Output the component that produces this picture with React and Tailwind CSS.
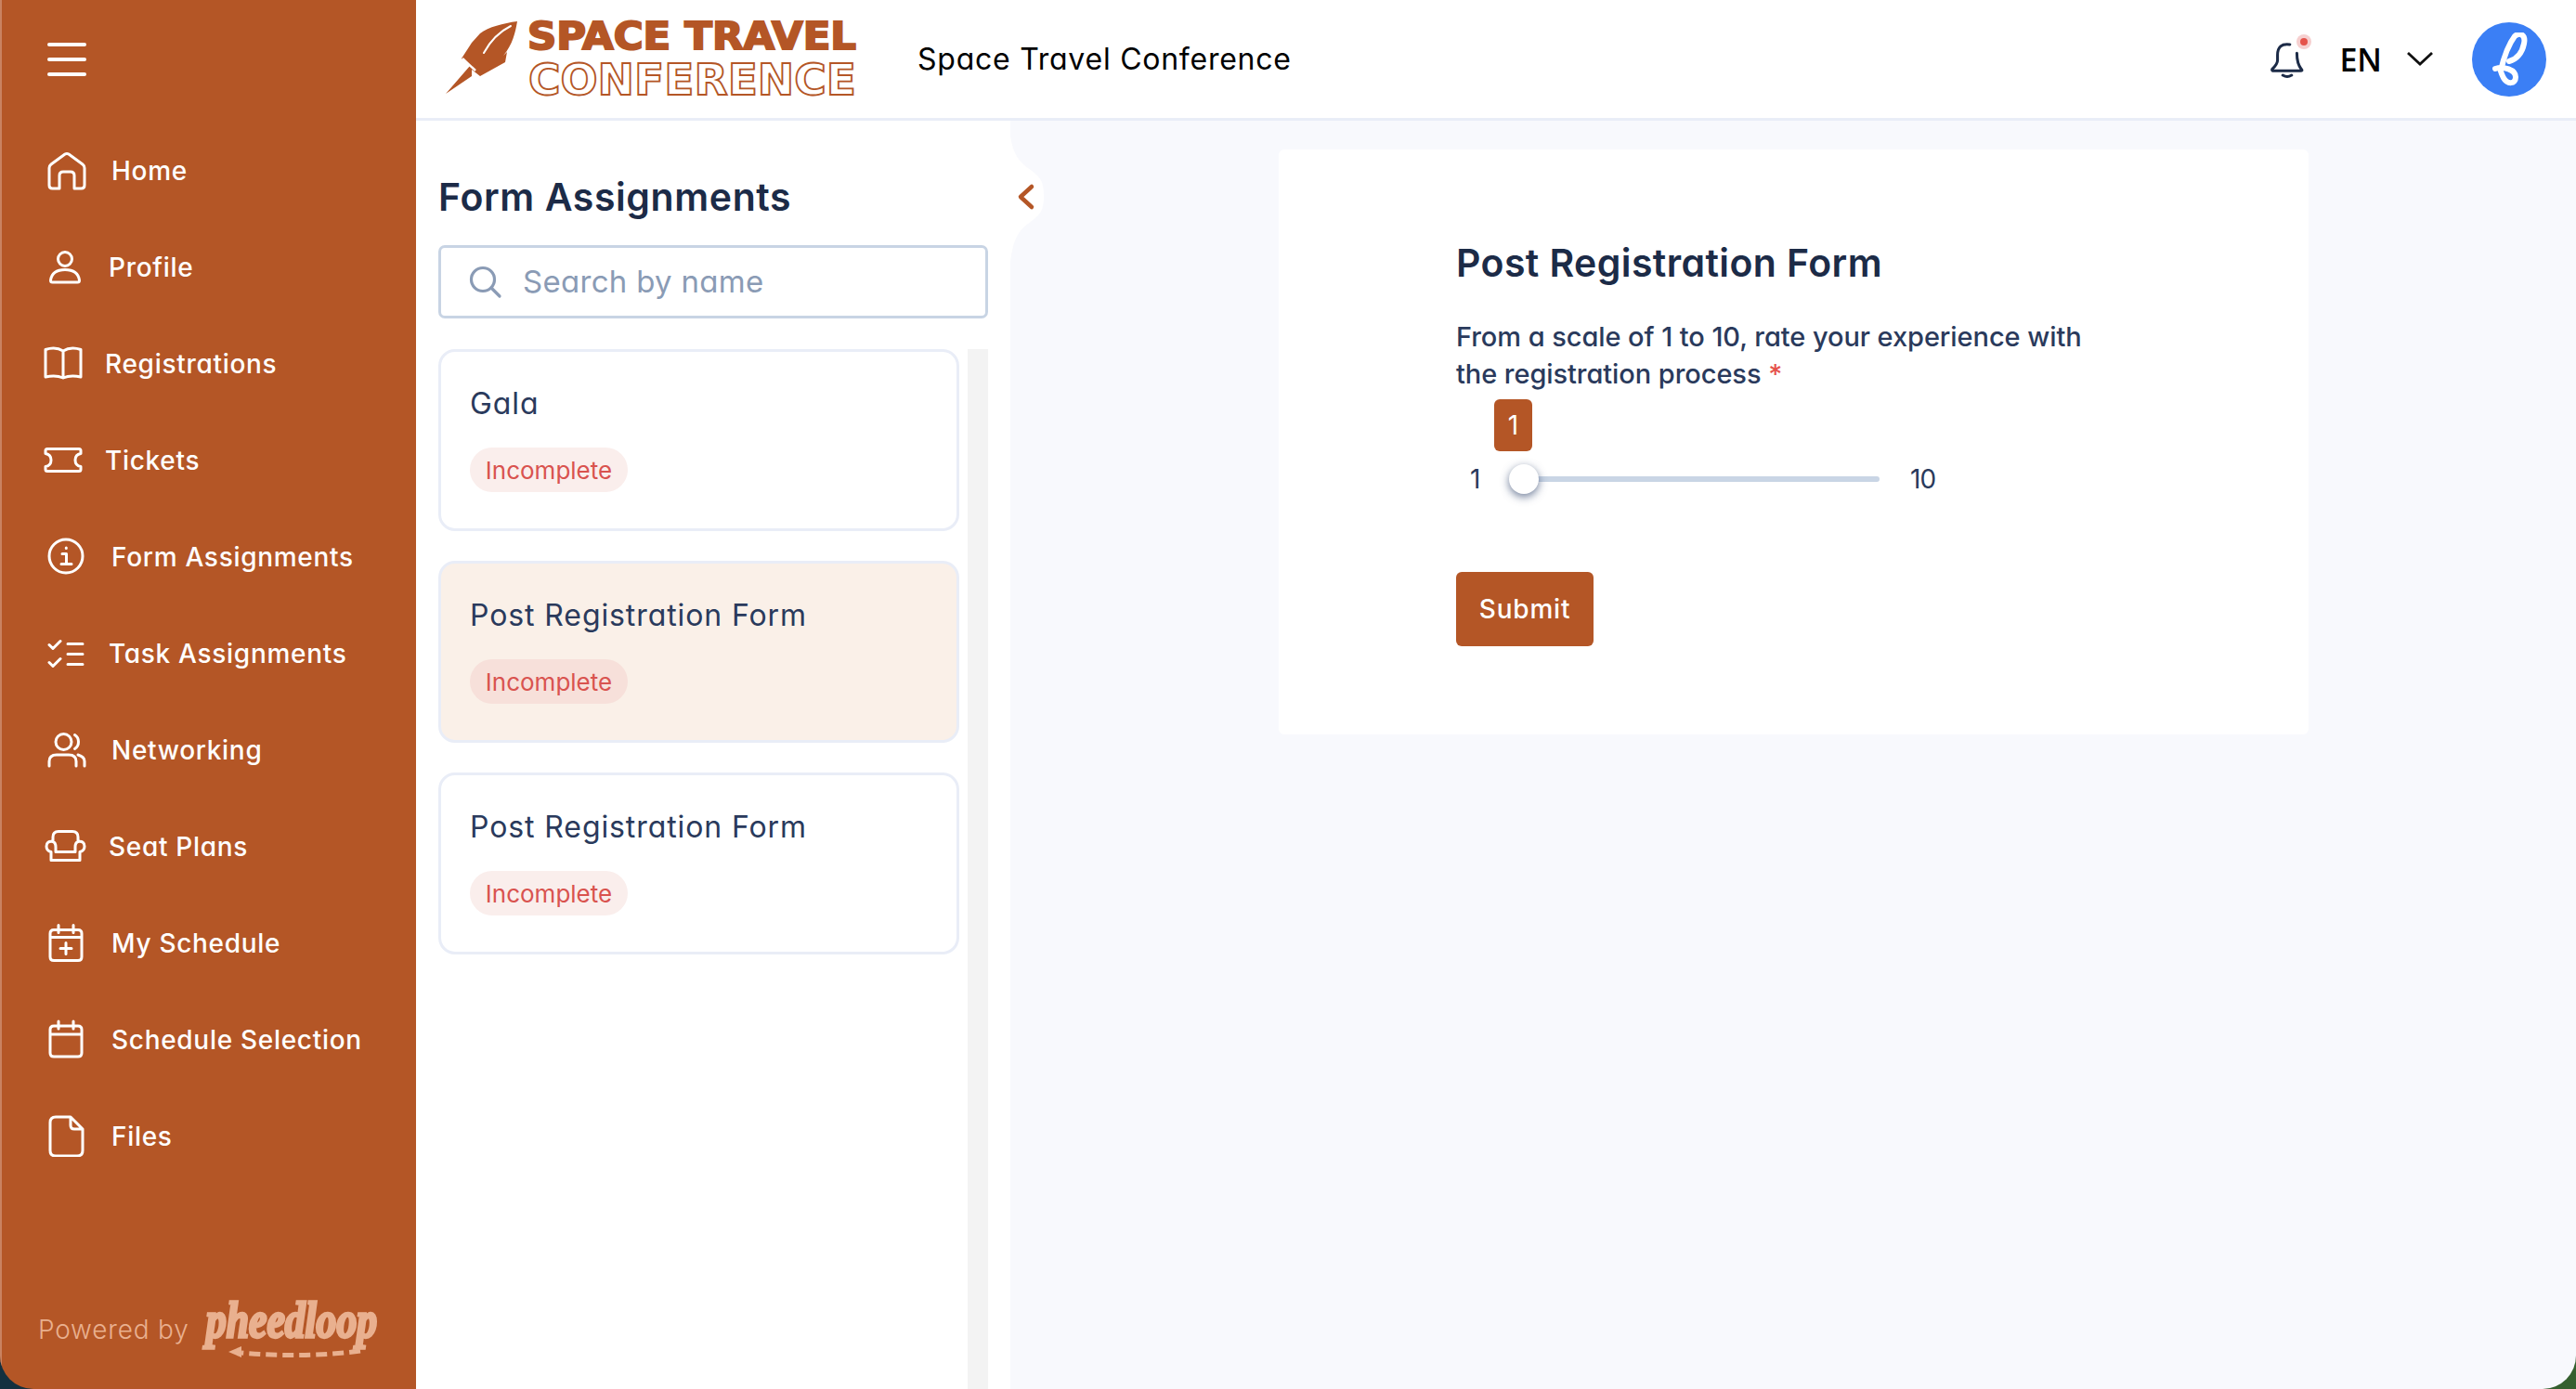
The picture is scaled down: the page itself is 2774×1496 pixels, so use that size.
const NAV = [
  { label: 'Home', box: 'w-[80px]', icon: 'home' },
  { label: 'Profile', box: 'w-[77px]', icon: 'profile' },
  { label: 'Registrations', box: 'w-[73px]', icon: 'book' },
  { label: 'Tickets', box: 'w-[73px]', icon: 'ticket' },
  { label: 'Form Assignments', box: 'w-[80px]', icon: 'info' },
  { label: 'Task Assignments', box: 'w-[77px]', icon: 'tasks' },
  { label: 'Networking', box: 'w-[80px]', icon: 'people' },
  { label: 'Seat Plans', box: 'w-[77px]', icon: 'chair' },
  { label: 'My Schedule', box: 'w-[80px]', icon: 'calendarPlus' },
  { label: 'Schedule Selection', box: 'w-[80px]', icon: 'calendar' },
  { label: 'Files', box: 'w-[80px]', icon: 'file' },
];

const CARDS = [
  { title: 'Gala', active: false },
  { title: 'Post Registration Form', active: true },
  { title: 'Post Registration Form', active: false },
];

const ICON_PATHS = {
  home: 'M13 39H5.5Q2 39 2 35.5V17Q2 14.5 4 13L19 2Q21 0.8 23 2L38 13Q40 14.5 40 17V35.5Q40 39 36.5 39H29V25Q29 21 25 21H17Q13 21 13 25V39Z',
  profile: 'M26.5 8.5A7.5 7.5 0 1 1 11.5 8.5A7.5 7.5 0 1 1 26.5 8.5ZM3.5 31.5Q5 20 19 20Q33 20 34.5 31.5Q34.5 33.5 32.5 33.5H5.5Q3.5 33.5 3.5 31.5Z',
  book: 'M2 33V3.5Q13 0 21 5Q29 0 40 3.5V33Q29 30.5 21 34Q13 30.5 2 33ZM21 5V34',
  ticket: 'M4 2H38Q40 2 40 4V7Q34 8 34 14Q34 20 40 21V24Q40 26 38 26H4Q2 26 2 24V21Q8 20 8 14Q8 8 2 7V4Q2 2 4 2Z',
  info: 'M38 20.5A18 18 0 1 1 2 20.5A18 18 0 1 1 38 20.5ZM16 18H20.5V29M15 29H26M20.3 11.5V12',
  tasks: 'M2 9L6 13L14 5M2 28L6 32L14 24M22 8H38M22 19H38M22 30H38',
  people: 'M26 11A8.5 8.5 0 1 1 9 11A8.5 8.5 0 1 1 26 11ZM29.5 3.5Q33.5 6 33.5 11Q33.5 16 29.5 18.5M2 37V32Q2 25 10 25H23Q31 25 31 32V37M33 25Q40 27 40 32V37',
  chair: 'M9 13V8Q9 2 15 2H30Q36 2 36 8V13M9 13Q2 12 2 18Q2 23 7 24V33H38V24Q43 23 43 18Q43 12 36 13Q33 14 33 19V24H12V19Q12 14 9 13Z',
  calendarPlus: 'M7 6H33Q37 6 37 10V35Q37 39 33 39H7Q3 39 3 35V10Q3 6 7 6ZM12 1V9M28 1V9M3 14H37M20 20V32M14 26H26',
  calendar: 'M7 6H33Q37 6 37 10V35Q37 39 33 39H7Q3 39 3 35V10Q3 6 7 6ZM12 1V9M28 1V9M3 15H37',
  file: 'M9 2H25L38 15V38Q38 44 32 44H9Q3 44 3 38V8Q3 2 9 2ZM25 2V11Q25 15 29 15H38',
};

// vertical nudge of each glyph inside its 46px box
const ICON_DY = {
  home: 4,
  profile: 6.5,
  book: 5,
  ticket: 9.5,
  info: 2.5,
  tasks: 5.5,
  people: 4,
  chair: 5.5,
  calendarPlus: 3.5,
  calendar: 3,
  file: 1,
};

const ICON_OFFSET = {
  home: 'ml-[11px]',
  profile: 'ml-[11px]',
  book: 'ml-[7px]',
  ticket: 'ml-[7px]',
  info: 'ml-[11px]',
  tasks: 'ml-[11px]',
  people: 'ml-[11px]',
  chair: 'ml-[8px]',
  calendarPlus: 'ml-[11px]',
  calendar: 'ml-[11px]',
  file: 'ml-[11px]',
};

function NavIcon({ name }) {
  return (
    <svg className="block" width="46" height="46" viewBox="0 0 46 46" fill="none" stroke="currentColor" strokeWidth="3" strokeLinecap="round" strokeLinejoin="round">
      <path d={ICON_PATHS[name]} transform={`translate(0 ${ICON_DY[name]})`} />
    </svg>
  );
}

function Sidebar() {
  return (
    <aside className="flex w-[448px] shrink-0 flex-col border-l-[2px] border-[#c98261] bg-[#b45626] text-white">
      <div className="flex h-[131px] shrink-0 items-start pl-[49px] pt-[46px]">
        <div className="flex w-[42px] flex-col gap-[12px]">
          <span className="h-[4px] rounded-full bg-white" />
          <span className="h-[4px] rounded-full bg-white" />
          <span className="h-[4px] rounded-full bg-white" />
        </div>
      </div>
      <nav className="flex flex-col">
        {NAV.map((item) => (
          <div key={item.label} className="flex h-[104px] items-center pl-[38px]">
            <div className={`${item.box} shrink-0`}>
              <div className={ICON_OFFSET[item.icon]}>
                <NavIcon name={item.icon} />
              </div>
            </div>
            <span className="pt-[2px] text-[28px] font-medium tracking-[0.7px]">{item.label}</span>
          </div>
        ))}
      </nav>
      <div className="mt-auto flex h-[124px] items-start pl-[39px] text-[#e9b08f]">
        <span className="mt-[39px] text-[28px] font-light tracking-[0.8px]">Powered by</span>
        <svg className="ml-[12px]" width="196" height="90" viewBox="0 0 196 90" fill="none">
          <text transform="translate(6 68) scale(1 1.3)" textLength="184" lengthAdjust="spacingAndGlyphs" fontFamily="'Liberation Serif', serif" fontStyle="italic" fontWeight="700" fontSize="42" fill="currentColor" stroke="currentColor" strokeWidth="2.5">pheedloop</text>
          <path d="M172 83Q110 91 44 85" stroke="currentColor" strokeWidth="5" strokeDasharray="12 6" />
          <path d="M30 84L44 78V90Z" fill="currentColor" />
        </svg>
      </div>
    </aside>
  );
}

function Logo() {
  return (
    <svg className="block" width="456" height="108" viewBox="0 -12 456 108" fill="none">
      <path d="M87 1C72 3 56 7 47 14L38 24L27 41L36 49L10 79L38 60L38 53L47 60L74 45L76 34L72 38C82 26 85 13 87 1Z" fill="#b45626" />
      <path d="M80 6C68 12 58 22 51 35" stroke="#fff" strokeWidth="2" strokeLinecap="round" />
      <path d="M28 41L42 54" stroke="#fff" strokeWidth="2.5" />
      <text x="98" y="31" textLength="354" lengthAdjust="spacingAndGlyphs" fontFamily="'DejaVu Sans', sans-serif" fontWeight="700" fontSize="40" fill="#b45626" stroke="#b45626" strokeWidth="2">SPACE TRAVEL</text>
      <text x="99" y="80" textLength="353" lengthAdjust="spacingAndGlyphs" fontFamily="'DejaVu Sans', sans-serif" fontWeight="700" fontSize="46" fill="#fff" stroke="#b45626" strokeWidth="1.8">CONFERENCE</text>
    </svg>
  );
}

function Header() {
  return (
    <header className="flex h-[130px] shrink-0 items-center border-b-[3px] border-[#e9edf7] bg-white pl-[22px] pr-[32px]">
      <Logo />
      <span className="ml-[62px] text-[32px] tracking-[0.75px] text-black">Space Travel Conference</span>
      <div className="ml-auto flex items-center">
        <div className="relative">
          <svg className="block" width="36" height="42" viewBox="0 0 38 42" fill="none" stroke="#1c2b47" strokeWidth="3.2" strokeLinecap="round" strokeLinejoin="round">
            <path d="M22 4Q8 2 8 16V22Q8 26 2 32Q1 34 4 34H34Q37 34 35 32Q30 26 30 14" />
            <path d="M14 39Q19 42 24 39" />
          </svg>
          <span className="absolute right-[-8px] top-[-6px] flex h-[16px] w-[16px] items-center justify-center rounded-full bg-[#f6cfcf]">
            <span className="h-[8px] w-[8px] rounded-full bg-[#e5534b]" />
          </span>
        </div>
        <span className="ml-[38px] text-[34px] font-semibold leading-none text-black [font-family:'Open_Sans',sans-serif]">EN</span>
        <svg className="ml-[27px]" width="28" height="15" viewBox="0 0 28 15" fill="none" stroke="#111" strokeWidth="2.8">
          <path d="M1 1L14 13L27 1" />
        </svg>
        <div className="ml-[42px] flex h-[80px] w-[80px] items-center justify-center rounded-full bg-[#3b7ff5]">
          <svg width="40" height="58" viewBox="0 0 40 58" fill="none" stroke="#fff" strokeWidth="6" strokeLinecap="round" strokeLinejoin="round">
            <path d="M11 41C14 28 20 12 26 4C32 -1 38 3 36 12C34 22 28 29 20 31" />
            <path d="M5 39C14 36 27 40 27 48C27 56 18 56 14 49C12 45 11 43 11 41" />
          </svg>
        </div>
      </div>
    </header>
  );
}

function AssignmentCard({ title, active }) {
  return (
    <div className={`h-[196px] rounded-[18px] border-[3px] border-[#e9edf7] pl-[31px] pt-[34px] ${active ? 'bg-[#faf0e8]' : 'bg-white'}`}>
      <div className="text-[32px] leading-[44px] text-[#2a3a5c] tracking-[0.9px]">{title}</div>
      <span className={`mt-[25px] flex h-[48px] w-[170px] items-center justify-center rounded-full text-[26px] text-[#d9534f] ${active ? 'bg-[#f7e0da]' : 'bg-[#faeeec]'}`}>
        Incomplete
      </span>
    </div>
  );
}

function AssignmentsPanel() {
  return (
    <section className="relative flex w-[640px] shrink-0 flex-col bg-white pl-[24px] pr-[24px] pt-[52px]">
      <h2 className="text-[41px] font-semibold leading-[60px] tracking-[0.6px] text-[#1c2b47]">Form Assignments</h2>
      <div className="mt-[22px] flex h-[79px] shrink-0 items-center rounded-[7px] border-[3px] border-[#c8d4e4] pl-[30px]">
        <svg width="36" height="36" viewBox="0 0 36 36" fill="none" stroke="#8a9bb5" strokeWidth="3.2" strokeLinecap="round">
          <circle cx="15" cy="15" r="12.5" />
          <path d="M24 24L33 33" />
        </svg>
        <span className="ml-[22px] text-[33px] tracking-[0.3px] text-[#8a9bb5]">Search by name</span>
      </div>
      <div className="mt-[33px] flex min-h-0 flex-1">
        <div className="flex w-[561px] shrink-0 flex-col gap-[32px]">
          {CARDS.map((c, i) => (
            <AssignmentCard key={i} title={c.title} active={c.active} />
          ))}
        </div>
        <div className="ml-[9px] w-[22px] bg-[#f3f3f3]" />
      </div>
      <svg className="absolute left-[639px] top-[-3px]" width="38" height="180" viewBox="0 0 38 180" fill="none">
        <path d="M0 0C0 30 6 44 20 54C34 64 37 68 37 84C37 100 34 104 20 114C6 124 0 140 0 180Z" fill="#fff" />
        <path d="M24 74L12 85L24 96" stroke="#b45626" strokeWidth="4.5" strokeLinecap="round" strokeLinejoin="round" />
      </svg>
    </section>
  );
}

function FormCard() {
  return (
    <div className="w-[1109px] rounded-[6px] bg-white pb-[95px] pl-[191px] pt-[92px]">
      <h1 className="pt-[1px] text-[41px] font-semibold leading-[59px] tracking-[0.4px] text-[#1c2b47]">Post Registration Form</h1>
      <p className="mt-[30px] text-[29px] font-medium leading-[40px] tracking-[-0.07px] text-[#2a3a5c]">
        From a scale of 1 to 10, rate your experience with
        <br />
        the registration process <span className="text-[#e5534b]">*</span>
      </p>
      <div className="ml-[41px] mt-[7px] flex h-[56px] w-[41px] items-center justify-center rounded-[6px] bg-[#b45626] text-[28px] text-white">1</div>
      <div className="mt-[14px] flex h-[32px] items-center text-[28px] text-[#2a3a5c]">
        <span className="ml-[15px] w-[10px]">1</span>
        <div className="relative ml-[48px] h-[6px] w-[383px] rounded-full bg-[#c9d5e5]">
          <span className="absolute left-[-16px] top-[-13px] h-[32px] w-[32px] rounded-full bg-white shadow-[0_3px_10px_rgba(50,70,110,0.7)]" />
        </div>
        <span className="ml-[33px] tracking-[-1px]">10</span>
      </div>
      <button className="mt-[84px] flex h-[80px] w-[148px] items-center justify-center rounded-[6px] bg-[#b45626] text-[28px] font-medium tracking-[0.8px] text-white">Submit</button>
    </div>
  );
}

export default function App() {
  return (
    <div className="h-[1496px] w-[2774px] overflow-hidden bg-[linear-gradient(to_right,#14303f_50%,#35602f_50%)] font-['Inter',sans-serif] [font-feature-settings:'cv11']">
      <div className="flex h-full w-full overflow-hidden rounded-b-[36px]">
        <Sidebar />
        <div className="flex min-w-0 flex-1 flex-col">
          <Header />
          <div className="flex min-h-0 flex-1 bg-[#f8f9fd]">
            <AssignmentsPanel />
            <main className="flex-1 pl-[289px] pt-[31px]">
              <FormCard />
            </main>
          </div>
        </div>
      </div>
    </div>
  );
}
